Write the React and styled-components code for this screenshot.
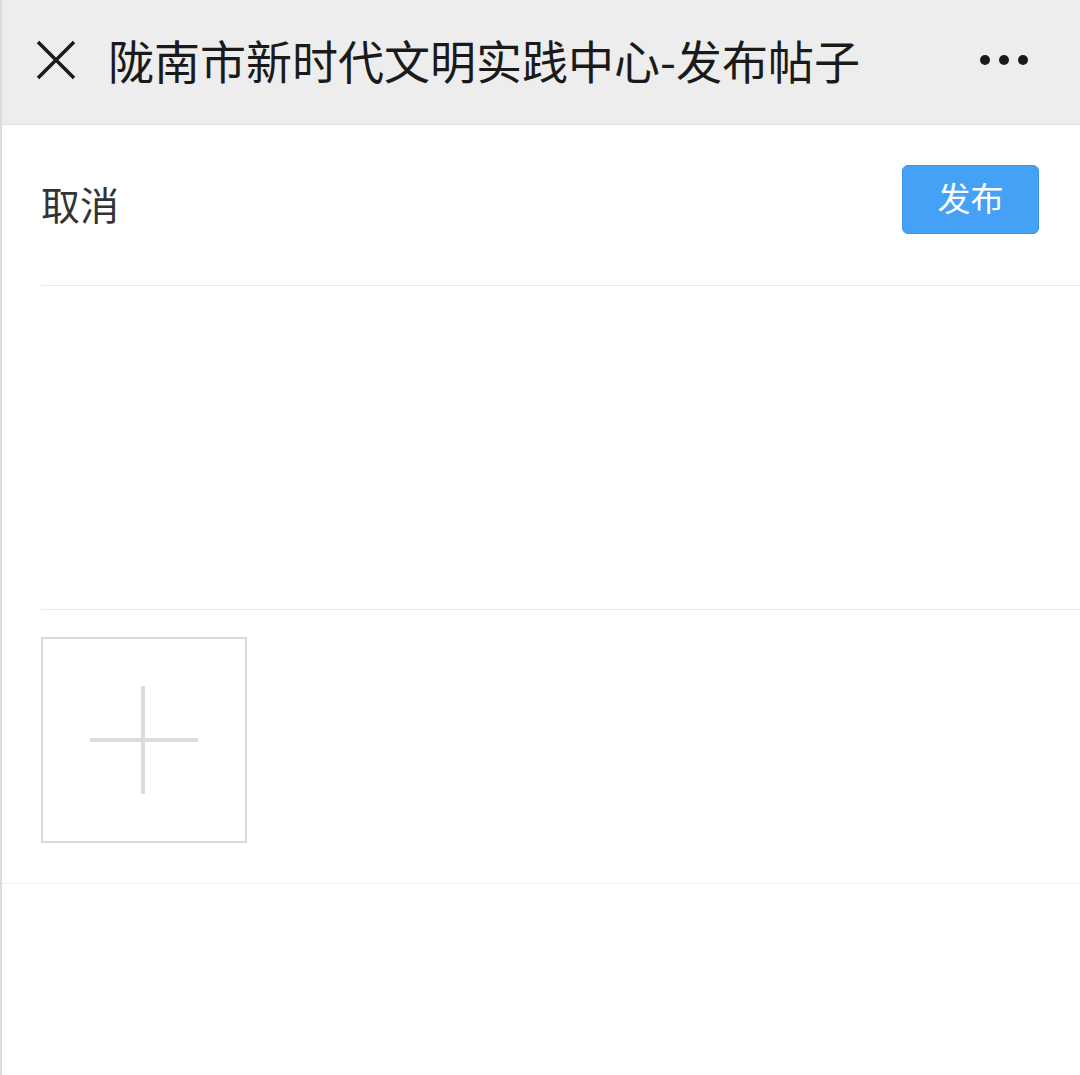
import React from "react";
import styled, { createGlobalStyle } from "styled-components";

const GlobalStyle = createGlobalStyle`
  html, body {
    margin: 0;
    padding: 0;
    background: #ffffff;
    font-family: "Noto Sans CJK SC", "Noto Sans", sans-serif;
  }
`;

const Page = styled.div`
  min-height: 1075px;
  border-left: 2px solid #dcdcdc;
  background: #ffffff;
  box-sizing: border-box;
`;

const TopBar = styled.header`
  height: 125px;
  display: flex;
  align-items: center;
  background: #ededed;
  border-bottom: 1px solid #e2e2e2;
  box-sizing: border-box;
  padding: 0 52px 0 34px;
`;

const CloseButton = styled.button`
  width: 40px;
  height: 40px;
  padding: 0;
  margin: -4px 32px 0 0;
  border: none;
  background: none;
  display: flex;
  align-items: center;
  justify-content: center;
`;

const Title = styled.h1`
  flex: 1;
  margin: -6px 0 0;
  font-size: 46px;
  font-weight: 400;
  line-height: 1;
  color: #1a1a1a;
  white-space: nowrap;
`;

const MoreDots = styled.div`
  display: flex;
  gap: 9px;
  margin-top: -4px;
`;

const Dot = styled.span`
  width: 10px;
  height: 10px;
  border-radius: 50%;
  background: #1a1a1a;
`;

const Form = styled.div`
  margin-left: 39px;
`;

const ActionRow = styled.div`
  height: 161px;
  display: flex;
  align-items: center;
  justify-content: space-between;
  padding-right: 41px;
  border-bottom: 1px solid #ebebeb;
  box-sizing: border-box;
`;

const CancelText = styled.span`
  font-size: 39px;
  line-height: 1;
  color: #333333;
  margin-top: -3px;
`;

const PublishButton = styled.button`
  width: 137px;
  height: 69px;
  border: 1px solid #3b91e4;
  border-radius: 6px;
  background: #44a1f6;
  color: #ffffff;
  font-family: "Noto Sans CJK SC", sans-serif;
  font-size: 33px;
  line-height: 1;
  padding: 0 0 4px;
  margin-top: -12px;
`;

const ContentArea = styled.div`
  height: 324px;
  border-bottom: 1px solid #ebebeb;
  box-sizing: border-box;
`;

const UploadRow = styled.div`
  padding: 27px 0 40px 39px;
  border-bottom: 1px solid #f1f1f1;
`;

const UploadBox = styled.div`
  width: 206px;
  height: 206px;
  border: 2px solid #d9d9d9;
  box-sizing: border-box;
  display: flex;
  align-items: center;
  justify-content: center;
`;

function App() {
  return (
    <>
      <GlobalStyle />
      <Page>
        <TopBar>
          <CloseButton aria-label="close">
            <svg width="40" height="40" viewBox="0 0 40 40">
              <path d="M2 2 L38 38 M38 2 L2 38" stroke="#1a1a1a" strokeWidth="3.4" />
            </svg>
          </CloseButton>
          <Title>陇南市新时代文明实践中心-发布帖子</Title>
          <MoreDots>
            <Dot />
            <Dot />
            <Dot />
          </MoreDots>
        </TopBar>
        <Form>
          <ActionRow>
            <CancelText>取消</CancelText>
            <PublishButton>发布</PublishButton>
          </ActionRow>
          <ContentArea />
        </Form>
        <UploadRow>
          <UploadBox>
            <svg width="108" height="108" viewBox="0 0 108 108">
              <path d="M0 54 H108 M53 0 V108" stroke="#dcdcdc" strokeWidth="4" />
            </svg>
          </UploadBox>
        </UploadRow>
      </Page>
    </>
  );
}

export default App;
